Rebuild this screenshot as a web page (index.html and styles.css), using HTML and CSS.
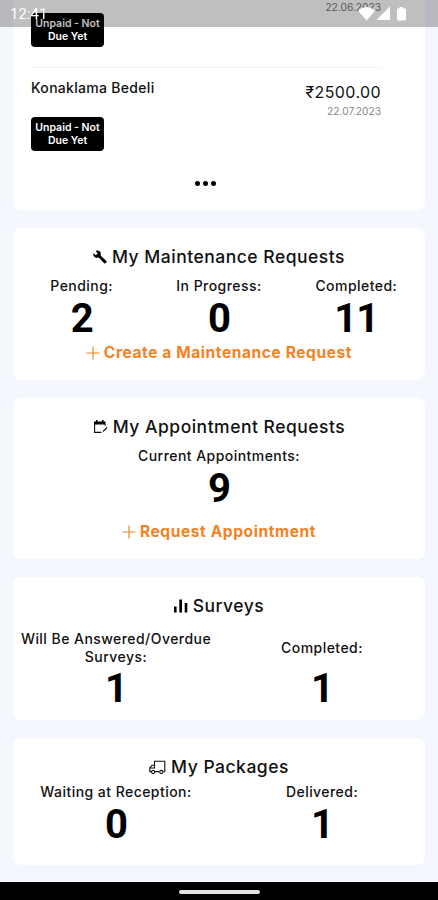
FILE: index.html
```
<!DOCTYPE html>
<html lang="en">
<head>
    <meta charset="UTF-8">
    <meta name="viewport" content="width=device-width, initial-scale=1.0">
    <title>Resident Dashboard</title>
    <link rel="stylesheet" href="styles.css">
</head>
<body>
    <div class="status-bar">
        <span class="clock">12:41</span>
        <svg class="status-icons" width="50" height="16" viewBox="0 0 50 16" fill="#fff">
            <path d="M0 4.5Q8.500-2.500 17 4.500L8.500 14.500Z"/>
            <path d="M32 0.500V14H18.500Z"/>
            <path d="M41.500 1H45V2.300H46.500Q48 2.300 48 3.800V13Q48 14.500 46.500 14.500H40.500Q39 14.500 39 13V3.800Q39 2.300 40.500 2.300H41.500Z"/>
        </svg>
    </div>

    <main class="page">
        <section class="card payments">
            <div class="payment payment-first">
                <div class="badge">Unpaid - Not<br>Due Yet</div>
                <div class="payment-side"><div class="date">22.06.2023</div></div>
            </div>
            <div class="payment">
                <div>
                    <div class="payment-name">Konaklama Bedeli</div>
                    <div class="badge">Unpaid - Not<br>Due Yet</div>
                </div>
                <div class="payment-side">
                    <div class="price">₹2500.00</div>
                    <div class="date">22.07.2023</div>
                </div>
            </div>
            <div class="more"><i></i><i></i><i></i></div>
        </section>

        <section class="card maintenance">
            <h2>
                <svg width="14" height="14" viewBox="0 0 14 14">
                    <path d="M0.300 3.200L2.800 5.300L4.800 3.600L2.600 1C4.600 0.100 6.700 0.800 7.500 2.500C8 3.600 7.900 4.600 7.600 5.500L13.300 11.100Q13.900 11.800 13.300 12.400L12.400 13.300Q11.800 13.800 11.200 13.200L5.700 7.500C3.900 8.200 2 7.800 1 6.400C0.300 5.400 0 4.300 0.300 3.200Z"/>
                </svg>
                <span>My Maintenance Requests</span>
            </h2>
            <div class="stats">
                <div class="stat"><div class="label">Pending:</div><div class="number">2</div></div>
                <div class="stat"><div class="label">In Progress:</div><div class="number">0</div></div>
                <div class="stat"><div class="label">Completed:</div><div class="number">11</div></div>
            </div>
            <a class="action">
                <svg width="14" height="14" viewBox="0 0 14 14"><path d="M7 0.500V13.500M0.500 7H13.500"/></svg>
                <span>Create a Maintenance Request</span>
            </a>
        </section>

        <section class="card appointments">
            <h2>
                <svg width="15" height="14" viewBox="0 0 15 14">
                    <path d="M1 1.500H3V0H4.500V1.500H9V0H10.500V1.500H12.500V4.500H1Z"/>
                    <path class="line thin" d="M1.600 4V12.400H8.500M12 4V5.500M10 11.500L14 7.500"/>
                </svg>
                <span>My Appointment Requests</span>
            </h2>
            <div class="stats">
                <div class="stat"><div class="label">Current Appointments:</div><div class="number">9</div></div>
            </div>
            <a class="action">
                <svg width="14" height="14" viewBox="0 0 14 14"><path d="M7 0.500V13.500M0.500 7H13.500"/></svg>
                <span>Request Appointment</span>
            </a>
        </section>

        <section class="card surveys">
            <h2>
                <svg width="14" height="14" viewBox="0 0 14 14">
                    <path d="M0 7.500H2.600V13.500H0ZM5.300 0.500H8V13.500H5.300ZM10.700 4H13.300V13.500H10.700Z"/>
                </svg>
                <span>Surveys</span>
            </h2>
            <div class="stats">
                <div class="stat"><div class="label">Will Be Answered/Overdue<br>Surveys:</div><div class="number">1</div></div>
                <div class="stat"><div class="label">Completed:</div><div class="number">1</div></div>
            </div>
        </section>

        <section class="card packages">
            <h2>
                <svg width="17" height="15" viewBox="0 0 17 15">
                    <path class="line thin" d="M5.500 5V1.200H15.800V11.600H14.500M10 11.600H6M2.200 11.600H0.800V8L3 5.200H5.500V8H0.800"/>
                    <circle class="line thin" cx="4.100" cy="12" r="1.600"/>
                    <circle class="line thin" cx="12.300" cy="12" r="1.600"/>
                </svg>
                <span>My Packages</span>
            </h2>
            <div class="stats">
                <div class="stat"><div class="label">Waiting at Reception:</div><div class="number">0</div></div>
                <div class="stat"><div class="label">Delivered:</div><div class="number">1</div></div>
            </div>
        </section>
    </main>

    <div class="nav-bar"><div class="nav-handle"></div></div>
</body>
</html>
```
FILE: styles.css
```
* {
    box-sizing: border-box;
}

body {
    margin: 0;
    height: 900px;
    overflow: hidden;
    display: flex;
    flex-direction: column;
    background: #f4f7fe;
    color: #111;
    font-family: Inter, Roboto, sans-serif;
}

/* system bars */
.status-bar {
    position: fixed;
    top: 0;
    left: 0;
    right: 0;
    z-index: 2;
    height: 27px;
    padding: 0 30px 0 10px;
    display: flex;
    align-items: center;
    justify-content: space-between;
    background: rgba(0, 0, 0, 0.25);
    color: white;
}

.clock {
    padding-top: 2px;
    font-family: Roboto, sans-serif;
    font-size: 15px;
    line-height: 27px;
}

.nav-bar {
    height: 18px;
    margin-top: auto;
    display: flex;
    align-items: center;
    justify-content: center;
    background: #000;
}

.nav-handle {
    width: 81px;
    height: 4px;
    margin-top: 2px;
    border-radius: 2px;
    background: #e4e2df;
}

/* cards */
.page {
    display: flex;
    flex-direction: column;
    gap: 18px;
    padding: 0 13px;
}

.card {
    padding-top: 17px;
    border-radius: 8px;
    background: white;
    text-align: center;
}

.payments {
    height: 210px;
    padding: 0 44px 0 18px;
    border-radius: 0 0 8px 8px;
    text-align: left;
}

.maintenance { height: 152px; }
.appointments { height: 161px; }
.surveys { height: 143px; }
.packages { height: 127px; }

.payment {
    display: flex;
    justify-content: space-between;
    padding-top: 11px;
}

.payment-first {
    height: 68px;
    padding-top: 0;
    border-bottom: 1px solid #f6f4f1;
}

.payment-first .badge {
    margin-top: 13px;
}

.payment-name {
    margin-bottom: 20px;
    font-size: 14px;
    font-weight: 500;
    line-height: 18px;
    letter-spacing: 0.3px;
}

.badge {
    width: 73px;
    height: 34px;
    padding-top: 5px;
    border-radius: 4px;
    background: #000;
    color: white;
    font-size: 10.5px;
    font-weight: 600;
    line-height: 12.5px;
    text-align: center;
}

.payment-side {
    text-align: right;
}

.price {
    margin-top: 3px;
    font-size: 16px;
    line-height: 20px;
    letter-spacing: 0.4px;
}

.date {
    margin-top: 2px;
    color: #888;
    font-size: 10.2px;
    line-height: 14px;
}

.payment-first .date {
    margin-top: 0;
    color: #777;
}

.more {
    display: flex;
    gap: 3px;
    margin-top: 30px;
    padding-left: 164px;
}

.more i {
    width: 5px;
    height: 5px;
    border-radius: 50%;
    background: #000;
}

h2 {
    display: flex;
    align-items: center;
    justify-content: center;
    gap: 5px;
    margin: 0 0 8px;
    font-size: 17.5px;
    font-weight: 500;
    line-height: 24px;
    letter-spacing: 0.5px;
}

.line {
    fill: none;
    stroke: #111;
    stroke-width: 1.4;
}

.thin {
    stroke-width: 1.1;
}

.stats {
    display: flex;
}

.stat {
    flex: 1;
    display: flex;
    flex-direction: column;
}

.label {
    flex: 1;
    display: flex;
    align-items: center;
    justify-content: center;
    font-size: 14px;
    font-weight: 500;
    line-height: 18px;
    letter-spacing: 0.45px;
    white-space: nowrap;
}

.number {
    margin-top: 4px;
    color: #000;
    font-family: Roboto, sans-serif;
    font-size: 40px;
    font-weight: 700;
    line-height: 40px;
    letter-spacing: -1px;
}

.surveys h2 {
    margin-bottom: 12px;
}

.surveys .number {
    margin-top: 3px;
}

.packages h2 {
    margin-bottom: 4px;
}

.action {
    display: flex;
    align-items: center;
    justify-content: center;
    gap: 4px;
    margin-top: 4px;
    color: #f5821f;
    font-size: 15.5px;
    font-weight: 700;
    line-height: 20px;
    letter-spacing: 0.6px;
}

.action path {
    stroke: #f5821f;
    stroke-width: 1.2;
}

.appointments .action {
    margin-top: 13px;
}
```
